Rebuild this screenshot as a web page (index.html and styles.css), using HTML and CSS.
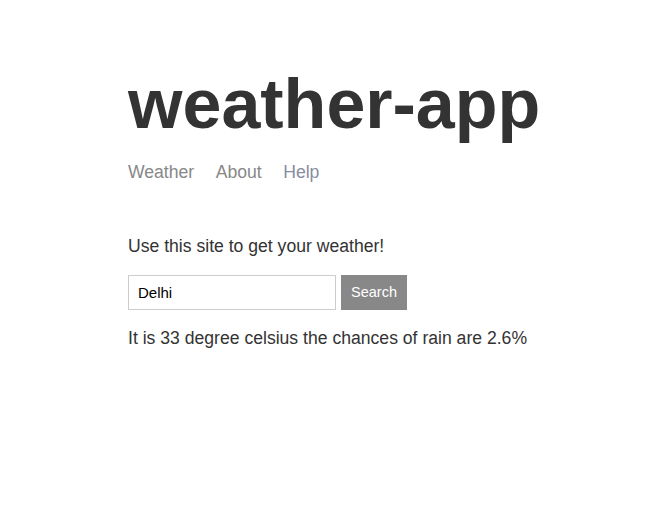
FILE: index.html
```html
<!DOCTYPE html>
<html>
<head>
<meta charset="utf-8">
<title>Weather</title>
<link rel="stylesheet" href="styles.css">
</head>
<body>
<div class="main">
  <header class="header">
    <h1 class="title">weather-app</h1>
    <nav class="nav">
      <a class="nav-link" href="#">Weather</a>
      <a class="nav-link" href="#">About</a>
      <a class="nav-link nav-link-visited" href="#">Help</a>
    </nav>
  </header>
  <p class="intro">Use this site to get your weather!</p>
  <form class="search-form">
    <input class="search-input" type="text" value="Delhi">
    <button class="search-button" type="button">Search</button>
  </form>
  <p class="result">It is 33 degree celsius the chances of rain are 2.6%</p>
</div>
</body>
</html>
```

FILE: styles.css
```css
html, body {
  margin: 0;
  padding: 0;
  background: #fff;
}
body {
  color: #333333;
  font-family: "Liberation Sans", Arial, sans-serif;
}
.main {
  max-width: 410px;
  margin: 0 auto;
}
.header {
  padding-top: 64px;
  margin-bottom: 53px;
}
.title {
  font-size: 70px;
  line-height: 1.15;
  margin: 0 0 17px 0;
  font-weight: bold;
  white-space: nowrap;
}
.nav {
  display: flex;
  gap: 21.5px;
  font-size: 17.6px;
}
.nav-link {
  color: #888888;
  text-decoration: none;
}
.nav-link-visited {
  color: #888c9e;
}
.intro {
  font-size: 17.6px;
  margin: 0 0 18px 0;
}
.search-form {
  display: flex;
  gap: 5px;
  margin: 0 0 18px 0;
}
.search-input {
  width: 188px;
  border: 1px solid #cccccc;
  padding: 8px 9px;
  font-family: "Liberation Sans", Arial, sans-serif;
  font-size: 15px;
  line-height: 17px;
  color: #000;
  margin: 0;
}
.search-button {
  border: 1px solid #888888;
  background: #888888;
  color: #ffffff;
  padding: 8px 9px;
  font-family: "Liberation Sans", Arial, sans-serif;
  font-size: 14.5px;
  line-height: 17px;
  margin: 0;
}
.result {
  font-size: 17.6px;
  margin: 0;
}
```
